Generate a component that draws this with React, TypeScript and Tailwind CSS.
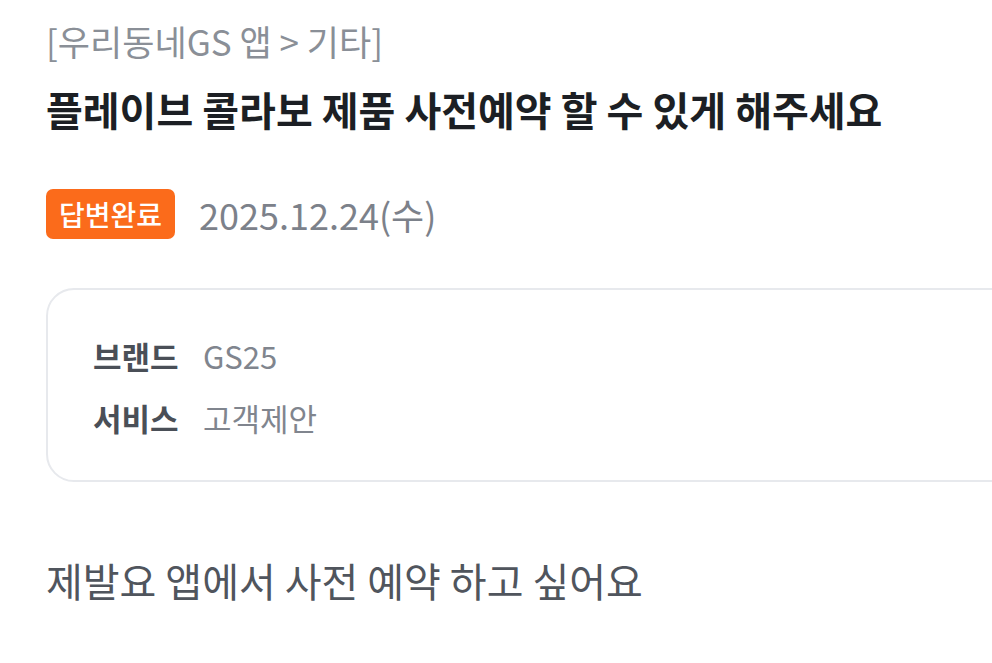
import React from "react";

const font = { fontFamily: '"Noto Sans CJK KR", "Noto Sans", sans-serif' };

interface InfoRowProps {
    label: string;
    value: string;
}

const InfoRow: React.FC<InfoRowProps> = ({ label, value }) => {
    return (
        <div className="flex flex-row items-center h-[62px]">
            <span className="w-[110px] text-[31px] font-bold text-[#4a4f57]">{label}</span>
            <span className="text-[31px] text-[#80858e]">{value}</span>
        </div>
    );
};

export default function App() {
    return (
        <div className="w-[992px] h-[663px] bg-white overflow-hidden" style={font}>
            <div className="pl-[46px] pt-[17px]">
                <p className="text-[35px] leading-[48px] text-[#8a8f97]">[우리동네GS 앱 &gt; 기타]</p>
                <h1 className="mt-[18px] text-[40px] leading-[52px] font-bold text-[#1c1f24]">
                    플레이브 콜라보 제품 사전예약 할 수 있게 해주세요
                </h1>
                <div className="mt-[52px] flex flex-row items-center space-x-[24px]">
                    <span className="h-[50px] px-[13px] rounded-[7px] bg-[#fb6b1b] text-white text-[28px] font-medium flex items-center">
                        답변완료
                    </span>
                    <span className="text-[36px] text-[#7c818a]">2025.12.24(수)</span>
                </div>
                <div className="mt-[47px] w-[1000px] h-[194px] border-2 border-[#e7e9ed] rounded-[28px] pl-[45px] pt-[35px]">
                    <InfoRow label="브랜드" value="GS25" />
                    <InfoRow label="서비스" value="고객제안" />
                </div>
                <p className="mt-[72px] text-[40px] leading-[52px] text-[#50555d]">제발요 앱에서 사전 예약 하고 싶어요</p>
            </div>
        </div>
    );
}
